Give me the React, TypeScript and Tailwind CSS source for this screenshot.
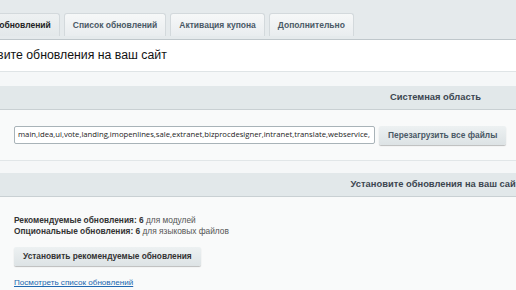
import React from "react";

const tabs = [
  { label: "Установка обновлений", active: true },
  { label: "Список обновлений" },
  { label: "Активация купона" },
  { label: "Дополнительно" },
];

export default function App() {
  return (
    <div
      className="w-[516px] h-[290px] overflow-hidden bg-[#f9fafa]"
      style={{ fontFamily: '"Liberation Sans", Arial, sans-serif' }}
    >
      <div className="w-[871px]">
        {/* Tabs area */}
        <div className="bg-[#e5eaec] pt-[13px] h-[40px] border-b border-[#bfc7cb]">
          <div className="flex items-end gap-[4px] -ml-[55px] h-[23px]">
            {tabs.map((t) => (
              <div
                key={t.label}
                className={
                  "h-[23px] px-[8px] flex items-center rounded-t-[3px] border border-b-0 border-[#d3d9dc] text-[8.5px] font-bold whitespace-nowrap " +
                  (t.active
                    ? "bg-gradient-to-b from-[#eef1f2] to-[#e3e8ea] text-[#222]"
                    : "bg-gradient-to-b from-[#f6f8f8] to-[#e9edef] text-[#4a5966]")
                }
              >
                {t.label}
              </div>
            ))}
          </div>
        </div>

        {/* Title */}
        <div className="bg-white h-[32px] flex items-center border-b border-[#dfe4e6]">
          <div className="-ml-[42px] text-[12.3px] text-[#111] whitespace-nowrap">Установите обновления на ваш сайт</div>
        </div>

        {/* Section 1 */}
        <div className="bg-[#f5f7f8] h-[14px]" />
        <div className="bg-[#e2e8ea] h-[24px] border-b border-[#c9d0d3] flex items-center justify-center">
          <span className="text-[9.35px] font-bold text-[#3c4650]">Системная область</span>
        </div>
        <div className="bg-[#f9fafa] h-[51px] flex items-center pl-[14px] gap-[4px] border-b border-[#e1e6e8]">
          <div className="w-[361px] h-[18px] bg-white border border-[#a9b3b8] rounded-[2px] flex items-center pl-[3px] overflow-hidden">
            <span
              className="text-[7.7px] text-[#222] whitespace-nowrap"
              style={{ fontFamily: '"Open Sans", sans-serif' }}
            >
              main,idea,ui,vote,landing,imopenlines,sale,extranet,bizprocdesigner,intranet,translate,webservice,
            </span>
          </div>
          <div className="h-[19px] px-[9px] flex items-center rounded-[2px] bg-gradient-to-b from-[#edf1f2] to-[#dde3e5] shadow-[0_1px_1px_rgba(0,0,0,0.25)] text-[8.4px] font-bold text-[#4a5966] whitespace-nowrap">
            Перезагрузить все файлы
          </div>
        </div>

        {/* Section 2 */}
        <div className="bg-[#f5f7f8] h-[12px]" />
        <div className="bg-[#e2e8ea] h-[24px] border-b border-[#c9d0d3] flex items-center justify-center">
          <span className="text-[9.35px] font-bold text-[#3c4650]">Установите обновления на ваш сайт</span>
        </div>
        <div className="bg-[#f9fafa] pl-[14px] pt-[18px]">
          <div className="text-[8.35px] leading-[11px] text-[#333]">
            <div>
              <span className="font-bold">Рекомендуемые обновления: 6</span>{" "}
              <span className="text-[#555]">для модулей</span>
            </div>
            <div>
              <span className="font-bold">Опциональные обновления: 6</span>{" "}
              <span className="text-[#555]">для языковых файлов</span>
            </div>
          </div>
          <div className="mt-[10px] inline-flex h-[19px] px-[9px] items-center rounded-[2px] bg-gradient-to-b from-[#edf1f2] to-[#dde3e5] shadow-[0_1px_1px_rgba(0,0,0,0.25)] text-[8.3px] font-bold text-[#333] whitespace-nowrap">
            Установить рекомендуемые обновления
          </div>
          <div className="mt-[9px] leading-[10px]">
            <a href="#" className="text-[8.1px] text-[#2067b0] underline">
              Посмотреть список обновлений
            </a>
          </div>
        </div>
      </div>
    </div>
  );
}
